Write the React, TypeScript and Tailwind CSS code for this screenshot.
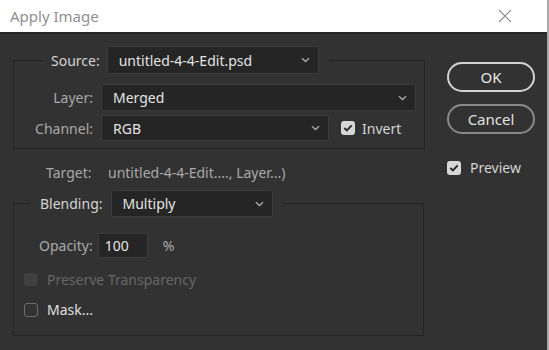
import React from 'react'

const FONT = { fontFamily: '"Noto Sans", "Open Sans", sans-serif' }

function Chevron() {
  return (
    <svg width="9" height="6" viewBox="0 0 9 6" className="shrink-0">
      <path d="M1 1.2 L4.5 4.6 L8 1.2" fill="none" stroke="#a8a8a8" strokeWidth="1.4" />
    </svg>
  )
}

function Select({ value, className }: { value: string; className: string }) {
  return (
    <div
      className={`flex items-center justify-between rounded-[2px] border border-[#3c3c3c] bg-[#252525] pl-[11px] pr-[8px] text-[14px] text-[#e4e4e4] ${className}`}
    >
      <span>{value}</span>
      <Chevron />
    </div>
  )
}

function Check({ checked, disabled }: { checked?: boolean; disabled?: boolean }) {
  if (checked) {
    return (
      <span className="flex h-[14px] w-[14px] items-center justify-center rounded-[3px] bg-[#d8d8d8]">
        <svg width="10" height="8" viewBox="0 0 10 8">
          <path d="M1.3 4 L3.9 6.4 L8.7 1.4" fill="none" stroke="#2b2b2b" strokeWidth="2" />
        </svg>
      </span>
    )
  }
  if (disabled) {
    return <span className="h-[13px] w-[13px] rounded-[2px] bg-[#404040]" />
  }
  return <span className="h-[14px] w-[14px] rounded-[3px] border border-[#6b6b6b]" />
}

export default function App() {
  return (
    <div className="flex h-[350px] w-[549px] flex-col overflow-hidden bg-[#323232] border-r-2 border-[#a9a9a9]" style={FONT}>
      {/* title bar */}
      <div className="flex h-[34px] shrink-0 items-center justify-between bg-white pl-[10px] pr-[35px] border-b-2 border-[#262626]">
        <span className="text-[15px] text-[#8f8f8f]">Apply Image</span>
        <svg width="14" height="14" viewBox="0 0 14 14">
          <path d="M1 1 L13 13 M13 1 L1 13" stroke="#8a8a8a" strokeWidth="1.1" />
        </svg>
      </div>

      <div className="flex flex-1 pt-[12px]">
        {/* left column */}
        <div className="flex w-[434px] flex-col pl-[13px]">
          <fieldset className="w-[412px] border border-[#242424] pb-[7px]">
            <legend className="ml-[29px] flex items-center px-[8px]">
              <span className="mr-[7px] text-[14px] text-[#d4d4d4]">Source:</span>
              <Select value="untitled-4-4-Edit.psd" className="h-[28px] w-[212px]" />
              <span className="w-[2px]" />
            </legend>
            <div className="mt-[10px] flex items-center">
              <span className="w-[79px] text-right text-[14px] text-[#a9a9a9]">Layer:</span>
              <Select value="Merged" className="ml-[8px] h-[27px] w-[315px]" />
            </div>
            <div className="mt-[4px] flex items-center">
              <span className="w-[79px] text-right text-[14px] text-[#a9a9a9]">Channel:</span>
              <Select value="RGB" className="ml-[8px] h-[26px] w-[228px]" />
              <span className="ml-[12px]">
                <Check checked />
              </span>
              <span className="ml-[7px] text-[14px] text-[#d4d4d4]">Invert</span>
            </div>
          </fieldset>

          <div className="mt-[13px] flex items-center text-[14px] text-[#a9a9a9]">
            <span className="ml-[33px] w-[62px]">Target:</span>
            <span>untitled-4-4-Edit...., Layer...)</span>
          </div>

          <fieldset className="mt-[7px] mb-[14px] w-[411px] flex-1 border border-[#242424]">
            <legend className="ml-[16px] flex items-center px-[10px]">
              <span className="mr-[8px] text-[14px] text-[#d4d4d4]">Blending:</span>
              <Select value="Multiply" className="h-[27px] w-[162px]" />
            </legend>
            <div className="mt-[16px] flex items-center">
              <span className="ml-[25px] text-[14px] text-[#a9a9a9]">Opacity:</span>
              <div className="ml-[5px] flex h-[25px] w-[50px] items-center rounded-[2px] border border-[#3c3c3c] bg-[#252525] pl-[6px] text-[14px] text-[#e4e4e4]">
                100
              </div>
              <span className="ml-[15px] text-[14px] text-[#a9a9a9]">%</span>
            </div>
            <div className="mt-[11px] flex items-center pl-[10px]">
              <Check disabled />
              <span className="ml-[10px] text-[14px] text-[#666666]">Preserve Transparency</span>
            </div>
            <div className="mt-[9px] flex items-center pl-[10px]">
              <Check />
              <span className="ml-[9px] text-[14px] text-[#e0e0e0]">Mask...</span>
            </div>
          </fieldset>
        </div>

        {/* right column */}
        <div className="flex flex-col pl-[13px] pt-[16px]">
          <button className="flex h-[30px] w-[88px] items-center justify-center rounded-full border-2 border-[#d2d2d2] text-[15px] text-[#e8e8e8]">
            OK
          </button>
          <button className="mt-[12px] flex h-[30px] w-[88px] items-center justify-center rounded-full border-2 border-[#8a8a8a] text-[15px] text-[#e0e0e0]">
            Cancel
          </button>
          <div className="mt-[23px] flex items-center">
            <Check checked />
            <span className="ml-[9px] text-[14px] text-[#d4d4d4]">Preview</span>
          </div>
        </div>
      </div>
    </div>
  )
}
